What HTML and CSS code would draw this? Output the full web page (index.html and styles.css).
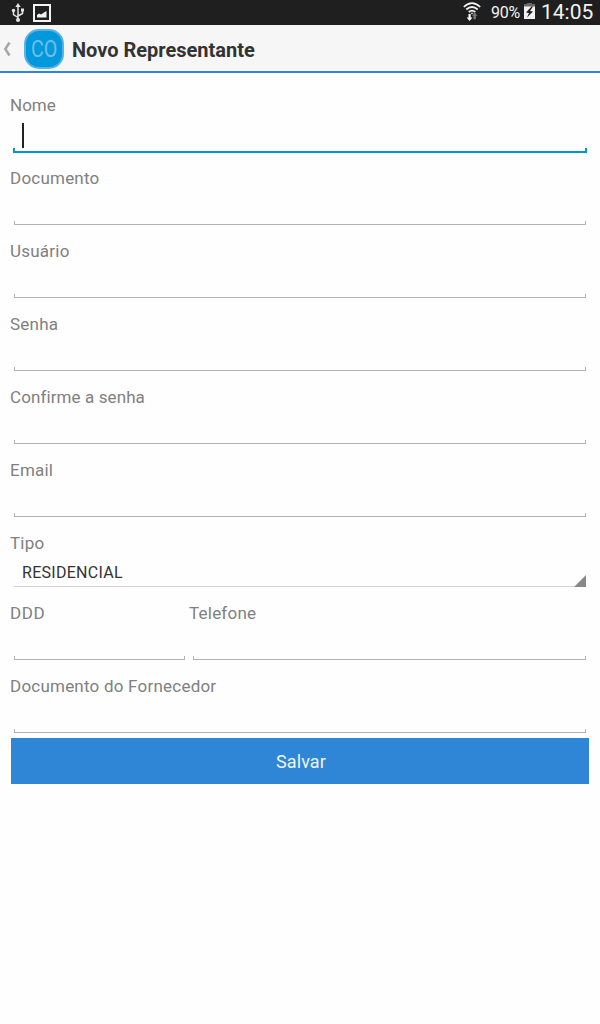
FILE: index.html
```html
<!DOCTYPE html>
<html lang="pt-BR">
<head>
<meta charset="utf-8">
<title>Novo Representante</title>
<link rel="stylesheet" href="styles.css">
</head>
<body>
<div class="status">
  <div class="status-left">
    <svg width="14" height="20" viewBox="0 0 14 20" fill="none" stroke="#e4e4e4" stroke-width="1.5"><path d="M7 3v14M2.500 8v3.500l4.500 3M11.500 7v3.500L7 13"/><path d="M7 0l2.700 4H4.300z" fill="#e4e4e4" stroke="none"/><circle cx="7" cy="17" r="2" fill="#e4e4e4" stroke="none"/><circle cx="2.500" cy="7.500" r="1.700" fill="#e4e4e4" stroke="none"/><path d="M10 5.500h3v3h-3z" fill="#e4e4e4" stroke="none"/></svg>
    <svg width="18" height="18" viewBox="0 0 18 18"><path d="M1 1h16v16H1z" fill="none" stroke="#f2f2f2" stroke-width="2"/><path d="M4 13.500V11l2-1.500 2 1 3-2L13.500 7v6.500z" fill="#f2f2f2"/></svg>
  </div>
  <div class="status-right">
    <svg class="wifi" width="18" height="20" viewBox="0 0 18 20"><g fill="none" stroke="#f2f2f2" stroke-width="1.700"><path d="M.8 5Q9-2.800 17.200 5M3.300 7.500q5.700-5 11.400 0M5.700 10q3.300-2.800 6.600 0"/></g><path d="M7.300 10.700h3.400L9 12.300z" fill="#f2f2f2"/><path d="M5.500 12h2.200v3.500h1.800L6.600 19l-3-3.500h1.900z" fill="#fff"/><path d="M10.500 17.200v-3.400H8.900l2.800-3.300 2.800 3.300h-1.600v3.400z" fill="#777"/></svg>
    <span class="percent">90%</span>
    <svg class="battery" width="11" height="16" viewBox="0 0 11 16"><path d="M3 0h5v1h3v3H0V1h3z" fill="#686868"/><path d="M0 3.500h11V16H0z" fill="#f2f2f2"/><path d="M7.500 3.500L2 9.500l3 .5-2 4.500 6-6-3-.5 3-4.500z" fill="#1f1f1f"/></svg>
    <span class="clock">14:05</span>
  </div>
</div>
<header class="bar">
  <svg class="back" width="8" height="14" viewBox="0 0 8 14"><path d="M6.500.5L2.300 7l4.200 6.500" fill="none" stroke="#a6a6a6" stroke-width="2.500"/></svg>
  <div class="logo"><span>CO</span></div>
  <h1>Novo Representante</h1>
</header>
<form class="form">
  <div class="field focused"><label>Nome</label><div class="input"><i class="caret"></i></div></div>
  <div class="field"><label>Documento</label><div class="input"></div></div>
  <div class="field"><label>Usuário</label><div class="input"></div></div>
  <div class="field"><label>Senha</label><div class="input"></div></div>
  <div class="field confirm"><label>Confirme a senha</label><div class="input"></div></div>
  <div class="field"><label>Email</label><div class="input"></div></div>
  <div class="field tipo"><label>Tipo</label><div class="select"><span>RESIDENCIAL</span><svg width="12" height="12" viewBox="0 0 12 12"><path d="M12 0v12H0z" fill="#888"/></svg></div></div>
  <div class="row">
    <div class="field ddd"><label>DDD</label><div class="input"></div></div>
    <div class="field phone"><label>Telefone</label><div class="input"></div></div>
  </div>
  <div class="field last"><label>Documento do Fornecedor</label><div class="input"></div></div>
  <button type="button" class="save">Salvar</button>
</form>
</body>
</html>
```
FILE: styles.css
```css
* { box-sizing: border-box; }
body { margin: 0; background: #fefefe; font-family: Roboto, "Liberation Sans", sans-serif; height: 1024px; overflow: hidden; }
svg { display: block; flex: none; }
.status { height: 25px; background: #1f1f1f; color: #f2f2f2; display: flex; justify-content: space-between; padding: 0 6px 0 11px; }
.status-left { display: flex; gap: 8px; padding-top: 3px; }
.status-left svg + svg { margin-top: 1px; }
.status-right { display: flex; align-items: flex-start; }
.wifi { margin: 2px 10px 0 0; }
.percent { font-size: 16px; line-height: 25px; width: 30px; letter-spacing: -.2px; margin-right: 3px; }
.battery { margin: 3px 6px 0 0; }
.clock { font-size: 21px; line-height: 24px; width: 53px; }
.bar { height: 48px; background: #f6f6f6; border-bottom: 2px solid #2f86d6; display: flex; align-items: center; padding: 0 4px 0 3px; }
.back { margin-top: 1px; }
.logo { width: 40px; height: 40px; margin: 1px 8px 0 13px; border-radius: 15px; background: #0298dc; border: 2px solid #58b2e8; display: flex; align-items: center; justify-content: center; color: #70bfe9; font-size: 24px; font-weight: 400; }
.logo span { transform: scaleX(.82); }
h1 { margin: 3px 0 0; font-size: 20px; line-height: 24px; font-weight: 700; color: #333; }
.form { padding: 20px 10px 0; }
.field { height: 73px; }
.field label { display: block; height: 24px; line-height: 24px; font-size: 17px; letter-spacing: .22px; color: #808080; white-space: nowrap; }
.confirm label { letter-spacing: .1px; }
.input { height: 35px; margin: 0 4px; padding: 6px 8px 0; background: linear-gradient(#b2b2b2, #b2b2b2) left bottom / 1px 3px no-repeat, linear-gradient(#b2b2b2, #b2b2b2) right bottom / 1px 3px no-repeat; border-bottom: 1px solid #b2b2b2; }
.focused label { letter-spacing: 0; }
.focused .input { height: 36px; margin: 0 3px; padding-left: 9px; border-bottom: 2px solid #0099cc; background: linear-gradient(#0099cc, #0099cc) left bottom / 2px 3px no-repeat, linear-gradient(#0099cc, #0099cc) right bottom / 2px 3px no-repeat; }
.caret { display: block; width: 2px; height: 25px; background: #222; }
.tipo { height: 70px; }
.select { height: 32px; margin: 0 4px; border-bottom: 1px solid #d4d4d4; padding-left: 8px; display: flex; justify-content: space-between; align-items: flex-end; color: #333; font-size: 16px; letter-spacing: .28px; }
.select span { line-height: 27px; }
.select svg { margin-bottom: -1px; }
.row { display: flex; }
.ddd { width: 179px; }
.ddd label { letter-spacing: .6px; }
.phone { flex: 1; }
.last { height: 64px; }
.save { display: block; width: 578px; height: 46px; margin: 0 1px; border: 0; padding: 0 0 0 2px; background: #3086d6; color: #eef6fd; font: 18px Roboto, "Liberation Sans", sans-serif; letter-spacing: .1px; }
```
